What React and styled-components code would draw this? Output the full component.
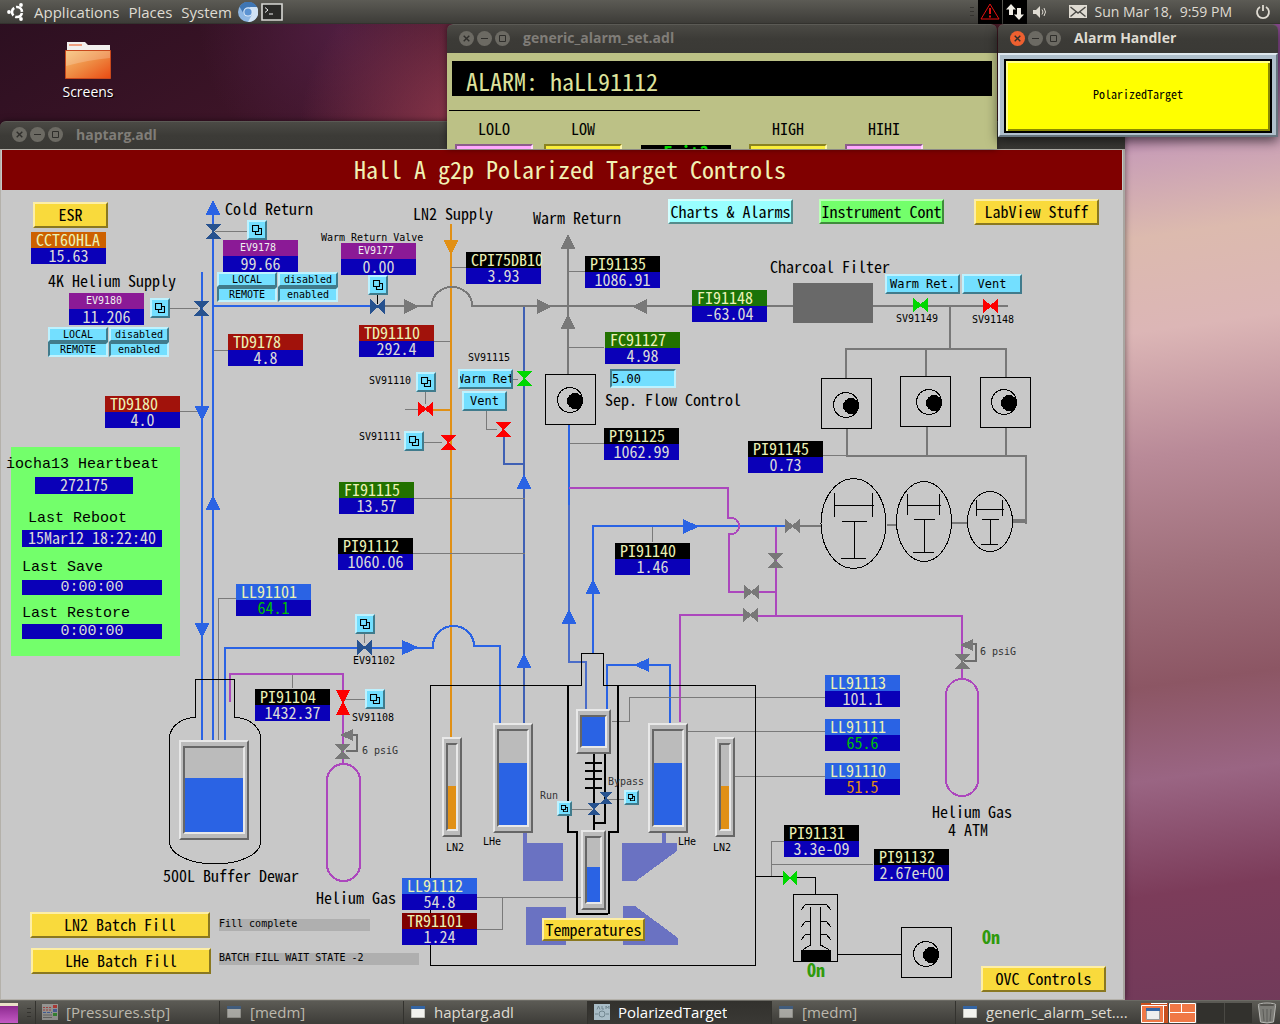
import React from "react";
import styled, { createGlobalStyle, css } from "styled-components";

/* ---------- theme values ---------- */

const uiFont = `"Open Sans", "Noto Sans", sans-serif`;
const fixedFont = `"Noto Sans Mono CJK JP", "Noto Sans CJK JP", "Liberation Mono", monospace`;
const wideFont = `"Liberation Mono", "DejaVu Sans Mono", monospace`;
const smallFont = `"DejaVu Sans Mono", "Liberation Mono", monospace`;

const color = {
  canvas: "#c8c8c8",
  blue: "#2a63e4",
  steel: "#3f60b4",
  slate: "#4a6cc8",
  navy: "#0a00b8",
  valve: "#27528f",
  gray: "#787878",
  wire: "#7a7a7a",
  orange: "#e19015",
  purple: "#ac47bd",
  magnet: "#6a72c2",
  red: "#fd0000",
  green: "#00d800",
};

const tone = {
  yellow: { face: "#f9da3c", light: "#fdeea6", dark: "#8a7820" },
  cyan: { face: "#73dfff", light: "#bdf2ff", dark: "#407b8c" },
  ice: { face: "#99ffff", light: "#d2ffff", dark: "#548c8c" },
  green: { face: "#73ff6b", light: "#bbffb8", dark: "#3f8c3b" },
  pink: { face: "#ffa8ff", light: "#ffd8ff", dark: "#8c5c8c" },
  lemon: { face: "#f9ee3c", light: "#fdf6a6", dark: "#8a8320" },
  face: { face: "#bbbbbb", light: "#e8e8e8", dark: "#666666" },
};

const raised = (t) => css`
  border: 2px solid;
  border-color: ${tone[t].light} ${tone[t].dark} ${tone[t].dark} ${tone[t].light};
  background: ${tone[t].face};
`;
const sunken = (t) => css`
  border: 2px solid;
  border-color: ${tone[t].dark} ${tone[t].light} ${tone[t].light} ${tone[t].dark};
  background: ${tone[t].face};
`;

const Global = createGlobalStyle`
  *, *::before, *::after { box-sizing: border-box; }
  body { margin: 0; font-family: ${uiFont}; }
  button, input { font: inherit; margin: 0; padding: 0; }
`;

/* ---------- desktop ---------- */

const Desktop = styled.div`
  display: flex;
  flex-direction: column;
  height: 100vh;
  overflow: hidden;
  background:
    radial-gradient(circle at 470px 130px, rgba(160, 64, 84, 0.8), rgba(120, 40, 70, 0) 170px),
    radial-gradient(circle at 340px 30px, rgba(84, 32, 70, 0.8), rgba(84, 32, 70, 0) 140px),
    linear-gradient(172deg, #8a4a90 8%, #c99fb6 15%, #dcbaae 23%, #dcb6b6 32%, #b98a98 44%, #a0707c 55%, #8c5664 66%, #9a6583 75%, #7c3c5a 86%, #6f3a5a 100%) right / 160px 100% no-repeat,
    linear-gradient(150deg, #2b0f20, #43162a 20%, #52202a 40%);
`;

const Panel = styled.header`
  flex: none;
  height: 24px;
  display: flex;
  align-items: center;
  position: relative;
  z-index: 5;
  color: #dfdbd2;
  font-size: 15px;
  line-height: 22px;
  background: linear-gradient(#5c5b55, #3d3c38);
  border-bottom: 1px solid #33322e;
`;

const MenuBar = styled.nav`
  display: flex;
  align-items: center;
  gap: 9px;
  padding-left: 7px;
`;

const Launchers = styled.div`
  display: flex;
  align-items: center;
  gap: 3px;
  margin-left: 6px;
`;

const PanelButton = styled.button`
  display: flex;
  align-items: center;
  border: 0;
  background: none;
  color: inherit;
  white-space: pre;
`;

const Clock = styled(PanelButton)`
  margin-right: 22px;
  font-size: 14px;
`;

const PowerButton = styled(PanelButton)`
  width: 18px;
  justify-content: center;
`;

const Tray = styled.div`
  margin-left: auto;
  display: flex;
  align-items: center;
  padding-right: 8px;
`;

const TrayCell = styled.span`
  display: flex;
  width: ${(p) => p.$w}px;
  height: 24px;
  align-items: center;
  justify-content: center;
  background: ${(p) => (p.$dark ? "#000" : "none")};
  margin-right: ${(p) => p.$gap || 0}px;
`;

const Workspace = styled.main`
  flex: 1;
  position: relative;
`;

const DesktopIcon = styled.a`
  position: absolute;
  left: 48px;
  top: 16px;
  width: 80px;
  display: flex;
  flex-direction: column;
  align-items: center;
  gap: 2px;
  color: #fff;
  font-size: 14px;
  line-height: 20px;
  text-decoration: none;
  text-shadow: 1px 1px 1px #000;
`;

/* ---------- windows ---------- */

const WindowFrame = styled.section`
  position: absolute;
  left: ${(p) => p.$x}px;
  top: ${(p) => p.$y}px;
  width: ${(p) => p.$w}px;
  height: ${(p) => (p.$h ? `${p.$h}px` : "auto")};
  z-index: ${(p) => p.$z};
  overflow: ${(p) => (p.$h ? "hidden" : "visible")};
  border-radius: 6px 6px 0 0;
  box-shadow: ${(p) => (p.$active ? "0 4px 12px rgba(0,0,0,.6)" : "0 0 6px rgba(0,0,0,.5)")};
`;

const TitleBar = styled.div`
  height: ${(p) => p.$h}px;
  display: flex;
  align-items: center;
  padding: 0 0 2px 12px;
  gap: 13px;
  border-radius: 6px 6px 0 0;
  border-top: 1px solid #5b5a55;
  background: linear-gradient(#4b4a45, #3c3b37 50%, #3a3935);
  color: ${(p) => (p.$active ? "#dfdbd2" : "#807d78")};
  font-size: 14px;
  font-weight: 700;
  line-height: 20px;
`;

const Controls = styled.div`
  display: flex;
  gap: 3px;
`;

const ControlButton = styled.button`
  width: 15px;
  height: 15px;
  border: 0;
  border-radius: 50%;
  display: grid;
  place-items: center;
  background: ${(p) => (p.$hot ? "#ee6030" : "#6c6a63")};
  color: #2f2e2b;
`;

function Title({ text, active, height }) {
  return (
    <TitleBar $active={active} $h={height}>
      <Controls>
        <ControlButton $hot={active} aria-label="Close">
          <svg width="7" height="7" viewBox="0 0 7 7" stroke="currentColor" strokeWidth="1.4">
            <path d="M.7.7l5.6 5.6M6.3.7L.7 6.3" />
          </svg>
        </ControlButton>
        <ControlButton aria-label="Minimize">
          <svg width="7" height="7" viewBox="0 0 7 7" stroke="currentColor">
            <path d="M0 3.5h7" />
          </svg>
        </ControlButton>
        <ControlButton aria-label="Maximize">
          <svg width="7" height="7" viewBox="0 0 7 7" stroke="currentColor" fill="none">
            <path d="M.5.5h6v6h-6z" />
          </svg>
        </ControlButton>
      </Controls>
      <span>{text}</span>
    </TitleBar>
  );
}

/* ---------- generic_alarm_set.adl ---------- */

const AlarmBody = styled.div`
  height: 200px;
  padding: 8px 5px;
  background: #bcc186;
  font-family: ${fixedFont};
  font-weight: 300;
`;

const AlarmBanner = styled.div`
  height: 35px;
  padding-left: 14px;
  background: #000;
  color: #dde29c;
  font-size: 24px;
  line-height: 40px;
`;

const AlarmRule = styled.hr`
  width: 251px;
  height: 1px;
  border: 0;
  margin: 14px 0 7px -3px;
  background: #000;
`;

const AlarmColumns = styled.div`
  display: flex;
  padding-left: 3px;
  font-size: 16px;
  line-height: 20px;
  text-align: center;
`;

const AlarmColumn = styled.div`
  width: ${(p) => p.$w || 78}px;
  margin-right: ${(p) => p.$gap || 0}px;
  display: flex;
  flex-direction: column;
  gap: 6px;
`;

const AlarmChoice = styled.button`
  height: 24px;
  ${(p) => sunken(p.$tone)}
`;

const AlarmState = styled.output`
  display: block;
  margin-top: 27px;
  height: 22px;
  background: #000;
  color: #00d800;
  font-size: 18px;
  font-weight: 700;
  line-height: 14px;
`;

/* ---------- Alarm Handler ---------- */

const HandlerBody = styled.div`
  height: 84px;
  padding: 4px;
  border: 2px solid;
  border-color: #dfe8ee #66757f #66757f #dfe8ee;
  background: #b0c0cc;
`;

const HandlerButton = styled.button`
  width: 100%;
  height: 74px;
  padding-bottom: 4px;
  border: 2px solid #000;
  background: #ff0;
  box-shadow: inset 2px 2px #ffff8c, inset -2px -2px #8a8a00;
  font-family: ${fixedFont};
  font-size: 12px;
  line-height: 16px;
`;

/* ---------- haptarg.adl ---------- */

const ORIGIN_Y = 190;

const Display = styled.div`
  border: 1px solid #b4b1aa;
  border-right: 2px solid #a8a5a0;
  background: ${color.canvas};
  font-family: ${fixedFont};
  font-weight: 300;
`;

const DisplayTitle = styled.h1`
  margin: 0 1px;
  padding-left: 16px;
  height: 40px;
  background: #800000;
  color: #f1f1b4;
  font-size: 24px;
  font-weight: 300;
  line-height: 38px;
  text-align: center;
`;

const Canvas = styled.div`
  position: relative;
  height: 809px;
  margin-left: -1px;
`;

const Piping = styled.svg`
  position: absolute;
  left: 0;
  top: 0;
  width: 1123px;
  height: 809px;
  shape-rendering: crispEdges;
`;

const placed = css`
  position: absolute;
  left: ${(p) => p.$x}px;
  top: ${(p) => p.$y - ORIGIN_Y}px;
`;

const Label = styled.span`
  ${placed}
  white-space: pre;
  color: ${(p) => p.$color || "#000"};
  font-family: ${(p) => (p.$kind === "small" ? smallFont : p.$kind === "wide" ? wideFont : fixedFont)};
  font-size: ${(p) => (p.$kind === "small" ? 10 : p.$kind === "wide" ? 15 : 16)}px;
  line-height: ${(p) => (p.$kind === "small" ? 14 : p.$kind === "wide" ? 24 : 18)}px;
`;

const PumpState = styled(Label)`
  font-size: 18px;
  font-weight: 700;
  color: #2f9a0c;
`;

const ReadoutBox = styled.div`
  ${placed}
  width: 75px;
  line-height: 14px;
  font-size: 16px;
`;

const ReadoutName = styled.div`
  height: 16px;
  padding-left: ${(p) => (p.$small ? 17 : 5)}px;
  background: ${(p) => p.$bg};
  color: ${(p) => (p.$small ? "#f0f0f0" : "#ebf1b5")};
  font-family: ${(p) => (p.$small ? smallFont : fixedFont)};
  font-size: ${(p) => (p.$small ? 10 : 16)}px;
  line-height: ${(p) => (p.$small ? 16 : 14)}px;
  white-space: nowrap;
`;

const ReadoutValue = styled.output`
  display: block;
  height: 16px;
  background: ${color.navy};
  color: ${(p) => p.$color || "#dadada"};
  text-align: center;
  white-space: nowrap;
`;

const StatusPanel = styled.div`
  ${placed}
  width: 169px;
  height: 209px;
  background: #73ff6b;
`;

const StatusValue = styled.output`
  ${placed}
  width: ${(p) => p.$w}px;
  height: ${(p) => p.$h}px;
  background: ${color.navy};
  color: #dadada;
  text-align: center;
  white-space: pre;
  font-family: ${(p) => (p.$wide ? wideFont : fixedFont)};
  font-size: ${(p) => (p.$wide ? 15 : 16)}px;
  line-height: 15px;
`;

const FillStatus = styled.output`
  ${placed}
  width: ${(p) => p.$w}px;
  height: 12px;
  background: #afafaf;
  font-family: ${smallFont};
  font-size: 10px;
  line-height: 10px;
  white-space: pre;
`;

const DisplayButton = styled.button`
  ${placed}
  ${(p) => raised(p.$tone)}
  width: ${(p) => p.$w}px;
  height: ${(p) => p.$h}px;
  padding-bottom: ${(p) => (p.$mid ? 0 : 2)}px;
  display: flex;
  align-items: center;
  justify-content: center;
  overflow: hidden;
  color: #000;
  white-space: nowrap;
  font-family: ${(p) => (p.$mid ? smallFont : fixedFont)};
  font-size: ${(p) => (p.$mid ? 12 : 16)}px;
  line-height: 20px;
`;

const RelatedButton = styled.button`
  ${placed}
  ${raised("cyan")}
  width: ${(p) => p.$s}px;
  height: ${(p) => p.$s}px;
  display: grid;
  place-items: center;
`;

const Choices = styled.div`
  ${placed}
  display: grid;
  grid-template-columns: 60px 60px;
  grid-auto-flow: column;
  grid-template-rows: 15px 15px;
  column-gap: 1px;
  font-family: ${smallFont};
  font-size: 10px;
  line-height: 11px;
  text-align: center;
`;

const Choice = styled.label`
  ${raised("cyan")}
  position: relative;
  &:has(input:checked) {
    ${sunken("cyan")}
  }
  input {
    position: absolute;
    inset: 0;
    opacity: 0;
  }
`;

const Setpoint = styled.input`
  ${placed}
  ${sunken("cyan")}
  width: 66px;
  height: 19px;
  border-radius: 0;
  outline: 0;
  font-family: ${smallFont};
  font-size: 12px;
  line-height: 14px;
`;

const Tank = styled.div`
  ${placed}
  ${raised("face")}
  width: ${(p) => p.$w}px;
  height: ${(p) => p.$h}px;
  padding: 4px 2px;
  display: flex;
`;

const Bar = styled.div`
  ${sunken("face")}
  flex: 1;
  display: flex;
  flex-direction: column;
  justify-content: flex-end;
`;

const Level = styled.div`
  background: ${(p) => p.$color};
`;

/* ---------- data ---------- */

const BLACK = "#000";
const READOUTS = [
  ["CCT60HLA", "15.63", 31, 232, "#cd6100"],
  ["EV9178", "99.66", 223, 240, "#8b1a96"],
  ["EV9180", "11.206", 69, 293, "#8b1a96"],
  ["EV9177", "0.00", 341, 243, "#8b1a96"],
  ["CPI75DB10", "3.93", 466, 252, BLACK],
  ["PI91135", "1086.91", 585, 256, BLACK],
  ["TD9178", "4.8", 228, 334, "#a1120b"],
  ["TD9180", "4.0", 105, 396, "#a1120b"],
  ["TD91110", "292.4", 359, 325, "#a1120b"],
  ["FI91148", "-63.04", 692, 290, "#1a7309"],
  ["FC91127", "4.98", 605, 332, "#227100"],
  ["PI91125", "1062.99", 604, 428, BLACK],
  ["PI91145", "0.73", 748, 441, BLACK],
  ["FI91115", "13.57", 339, 482, "#227100"],
  ["PI91112", "1060.06", 338, 538, BLACK],
  ["PI91140", "1.46", 615, 543, BLACK],
  ["LL91101", "64.1", 236, 584, color.blue, "#00c000"],
  ["PI91104", "1432.37", 255, 689, BLACK],
  ["LL91113", "101.1", 825, 675, color.blue],
  ["LL91111", "65.6", 825, 719, color.blue, "#00c000"],
  ["LL91110", "51.5", 825, 763, color.blue, color.orange],
  ["LL91112", "54.8", 402, 878, color.blue],
  ["TR91101", "1.24", 402, 913, "#800000"],
  ["PI91131", "3.3e-09", 784, 825, BLACK],
  ["PI91132", "2.67e+00", 874, 849, BLACK],
];

const LABELS = [
  ["Cold Return", 225, 199],
  ["4K Helium Supply", 48, 271],
  ["LN2 Supply", 413, 204],
  ["Warm Return", 533, 208],
  ["Charcoal Filter", 770, 257],
  ["Sep. Flow Control", 605, 390],
  ["500L Buffer Dewar", 163, 866],
  ["Helium Gas", 316, 888],
  ["Helium Gas", 932, 802],
  ["4 ATM", 948, 820],
  ["Warm Return Valve", 321, 231, "small"],
  ["SV91110", 369, 374, "small"],
  ["SV91111", 359, 430, "small"],
  ["SV91115", 468, 351, "small"],
  ["SV91149", 896, 312, "small"],
  ["SV91148", 972, 313, "small"],
  ["EV91102", 353, 654, "small"],
  ["SV91108", 352, 711, "small"],
  ["6 psiG", 362, 744, "small", "#333"],
  ["6 psiG", 980, 645, "small", "#333"],
  ["Run", 540, 789, "small", "#333"],
  ["Bypass", 608, 775, "small", "#333"],
  ["LN2", 446, 841, "small"],
  ["LHe", 483, 835, "small"],
  ["LHe", 678, 835, "small"],
  ["LN2", 713, 841, "small"],
  ["iocha13 Heartbeat", 6, 453, "wide"],
  ["Last Reboot", 28, 507, "wide"],
  ["Last Save", 22, 556, "wide"],
  ["Last Restore", 22, 602, "wide"],
];

const BUTTONS = [
  ["ESR", 33, 202, 75, 26, "yellow"],
  ["Charts & Alarms", 668, 199, 125, 25, "ice"],
  ["Instrument Cont", 819, 199, 125, 25, "green"],
  ["LabView Stuff", 974, 199, 125, 26, "yellow"],
  ["LN2 Batch Fill", 30, 912, 180, 26, "yellow"],
  ["LHe Batch Fill", 31, 948, 180, 26, "yellow"],
  ["Temperatures", 542, 918, 103, 23, "yellow"],
  ["OVC Controls", 981, 966, 125, 26, "yellow"],
  ["Warm Ret", 458, 369, 55, 20, "cyan", true],
  ["Vent", 462, 391, 45, 20, "cyan", true],
  ["Warm Ret.", 885, 274, 75, 20, "cyan", true],
  ["Vent", 962, 274, 60, 20, "cyan", true],
];

const RELATED = [
  ["EV9178 control", 247, 220, 20],
  ["EV9180 control", 150, 298, 20],
  ["EV9177 control", 368, 275, 20],
  ["SV91110 control", 416, 372, 20],
  ["SV91111 control", 404, 431, 20],
  ["EV91102 control", 355, 614, 20],
  ["SV91108 control", 365, 689, 20],
  ["Run valve control", 557, 801, 15],
  ["Bypass valve control", 624, 790, 15],
];

const TANKS = [
  [179, 740, 70, 100, 64, color.blue],
  [442, 737, 20, 100, 51, color.orange],
  [493, 723, 40, 110, 66, color.blue],
  [576, 709, 35, 45, 100, color.blue],
  [648, 723, 40, 110, 66, color.blue],
  [715, 737, 20, 100, 51, color.orange],
  [581, 830, 25, 80, 55, color.blue],
];

/* ---------- schematic parts ---------- */

/* flow arrow inside the box x, y, w, h, pointing in direction d */
function Arrow({ x, y, w = 15, h = 15, d, c = color.blue }) {
  const pts = {
    up: [x, y + h, x + w, y + h, x + w / 2, y],
    down: [x, y, x + w, y, x + w / 2, y + h],
    left: [x + w, y, x + w, y + h, x, y + h / 2],
    right: [x, y, x, y + h, x + w, y + h / 2],
  }[d];
  return <polygon points={pts.join(" ")} fill={c} />;
}

/* bow-tie valve; v is for one on a vertical pipe */
function Valve({ x, y, w = 15, h = 15, v, c = color.valve }) {
  const d = v
    ? `M${x} ${y}H${x + w}L${x + w / 2 + 1} ${y + h / 2}L${x + w} ${y + h}H${x}L${x + w / 2 - 1} ${y + h / 2}Z`
    : `M${x} ${y}L${x + w / 2} ${y + h / 2 - 1}L${x + w} ${y}V${y + h}L${x + w / 2} ${y + h / 2 + 1}L${x} ${y + h}Z`;
  return <path d={d} fill={c} />;
}

function Pump({ x, y, cx, cy }) {
  return (
    <g stroke="#000">
      <rect x={x + 0.5} y={y + 0.5} width="50" height="50" fill="none" />
      <circle cx={cx} cy={cy} r="12.5" fill="none" />
      <circle cx={cx + 5} cy={cy + 1} r="7.5" fill="#000" />
    </g>
  );
}

const pipes = [
  [color.orange, "M451 224V738M433 410H451"],
  [color.blue, "M202 272V740M213 214V740M213 306H370M225 740V648H433V646A20.5 20 0 0 1 474 646H500V724"],
  [color.steel, "M524 306V724M504 437V464H524"],
  [color.blue, "M569 425V505"],
  [color.slate, "M569 505V662H586V710"],
  [color.blue, "M593 653V526H786M607 710V665H670V724"],
  [color.gray, "M385 306H432V305A20 18 0 0 1 472 305V306H793M873 306H1008M950 306V350M846 378V349H1006V378M926 349V377"],
  [color.gray, "M847 428V456H1026V524M927 426V456M1006 427V456M568 248V375M800 526H822M887 525H897M952 523H968"],
  [color.purple, "M230 702V674H343V764M569 488H728V518H732A7 8 0 0 1 732 534H729V592H776M776 527V616M680 722V615H757M757 616H962V679"],
];

const wires =
  "M215 231.5H247M170 308.5H198M214 350.5H228M172 411.5H198M451 267.5H466M569 271.5H585M569 347.5H604M570 443.5H604" +
  "M434 341.5H450M425.5 392V404M405 409.5H418M424 442.5H442M512 379.5H518M486.5 411V429.5H497M823 455.5H848M414 498.5H525" +
  "M413 553.5H525M364.5 634V643M652.5 527V542M218.5 740V598.5H236M292.5 675V688M345 699.5H365M612 721.5H629.5V697.5H825" +
  "M688 731.5H831M735 776.5H826M477 897.5H581M477 929.5H502.5V897M572 809.5H592M608 799.5H624M771.5 876V841.5H784M771 864.5H873";

function Schematic() {
  return (
    <Piping viewBox={`0 ${ORIGIN_Y} 1123 809`} fill="none" role="img" aria-label="Cryogen piping schematic">
      <path
        fill={color.magnet}
        d="M523 833h4v10h36v38h-40zM526 907h40v38h-40zM662 833h4v10h11v8l-41 30h-14v-38h40zM623 906h12l43 32v7h-55z"
      />
      {pipes.map(([c, d]) => (
        <path key={d} d={d} stroke={c} strokeWidth="2" />
      ))}
      <path d="M1013 521H1027" stroke={color.gray} strokeWidth="4" />
      <path d={wires} stroke={color.wire} />
      <rect x="793" y="283" width="80" height="40" fill="#696969" />

      {/* helium bottles and their regulators */}
      <g stroke={color.purple} strokeWidth="2">
        <rect x="327" y="764" width="33" height="117" rx="16.5" />
        <rect x="946" y="679" width="32" height="117" rx="16" />
      </g>
      <path d="M350 735H357V751H346M971 644H976V661H964" stroke="#6c6c6c" strokeWidth="2" />
      <Arrow x={340} y={729} h={12} w={13} d="left" c={color.gray} />
      <Arrow x={960} y={639} h={12} w={13} d="left" c={color.gray} />

      {/* vessels and outlines */}
      <g stroke="#000">
        <path d="M195.5 679.5H234.5V717.5A26 21 0 0 1 260.5 738.5V842A45.5 22 0 0 1 169.5 842V738.5A26 21 0 0 1 195.5 717.5Z" />
        <path d="M430.5 685.5H581.5V653.5H603.5V685.5H755.5V965.5H430.5Z" />
        <path d="M755 876.5H784M797 877.5H815.5V894M838 954.5H901M377.5 295V304" />
        <path strokeWidth="2" d="M568 686V832H577V914H608M618 686V832H609V914M594 754V830M605 754V823H594M585 763H602M585 771H602M585 779H602M585 788H602" />
        <ellipse cx="853.5" cy="523.5" rx="32.5" ry="45" />
        <ellipse cx="924" cy="521.5" rx="27.5" ry="40" />
        <ellipse cx="990" cy="521.5" rx="22.5" ry="30" />
        <path d="M834.5 493V517M872.5 493V517M834 505.5H874M842 521.5H867M854.5 521V558M841 558.5H866" />
        <path d="M907.5 494V515M939.5 494V515M907 505.5H941M914 519.5H935M924.5 519V552M913 552.5H934" />
        <path d="M976.5 500V516M1002.5 500V516M976 509.5H1004M982 519.5H999M990.5 519V544M981 544.5H998" />
      </g>

      {/* turbo pump */}
      <g stroke="#000">
        <rect x="793.5" y="894.5" width="44" height="67" />
        <path d="M801 910L805.5 904.5H826.5L831 910M810.5 907V945L803 949.5M820.5 907V945L829 949.5" />
        <path d="M810 921.5H805.5L801 927M820 921.5H826.5L831 927M810 934.5H805.5L801 940M820 934.5H826.5L831 940" />
        <rect x="801.5" y="950.5" width="29" height="11" fill="#000" />
      </g>

      <Pump x={545} y={374} cx={570} cy={400} />
      <Pump x={821} y={378} cx={846} cy={405} />
      <Pump x={900} y={376} cx={929} cy={402} />
      <Pump x={980} y={377} cx={1004} cy={402} />
      <Pump x={901} y={927} cx={926} cy={954} />

      <Arrow x={205.5} y={200} d="up" />
      <Arrow x={205.5} y={495} d="up" />
      <Arrow x={194.5} y={406} d="down" />
      <Arrow x={194.5} y={623} d="down" />
      <Arrow x={516.5} y={474} d="up" />
      <Arrow x={516.5} y={653} d="up" />
      <Arrow x={561.5} y={609} d="up" />
      <Arrow x={585.5} y={579} d="up" />
      <Arrow x={402} y={640} w={17} d="right" />
      <Arrow x={683} y={519} w={16} d="right" />
      <Arrow x={634} y={658} w={15} h={14} d="left" />
      <Arrow x={443.5} y={240} d="down" c={color.orange} />
      <Arrow x={560.5} y={234} d="up" c={color.gray} />
      <Arrow x={560.5} y={314} d="up" c={color.gray} />
      <Arrow x={404} y={299} d="right" c={color.gray} />
      <Arrow x={537} y={299} d="right" c={color.gray} />
      <Arrow x={632} y={299} d="left" c={color.gray} />

      <Valve v x={206} y={224} />
      <Valve v x={194} y={301} />
      <Valve v x={588} y={803} w={12} h={12} />
      <Valve v x={600} y={792} w={12} h={12} />
      <Valve x={370} y={299} />
      <Valve x={357} y={640} />
      <Valve v x={441} y={435} c={color.red} />
      <Valve v x={496} y={422} c={color.red} />
      <Valve v x={336} y={690} w={14} h={25} c={color.red} />
      <Valve x={418} y={402} h={14} c={color.red} />
      <Valve x={983} y={299} h={14} c={color.red} />
      <Valve v x={517} y={371} c={color.green} />
      <Valve x={913} y={298} h={14} c={color.green} />
      <Valve x={783} y={871} w={14} h={14} c={color.green} />
      <Valve v x={335} y={744} c={color.gray} />
      <Valve v x={768} y={553} c={color.gray} />
      <Valve v x={955} y={654} c={color.gray} />
      <Valve x={785} y={519} h={14} c={color.gray} />
      <Valve x={744} y={585} h={14} c={color.gray} />
      <Valve x={743} y={608} h={14} c={color.gray} />
    </Piping>
  );
}

function RelatedIcon({ size }) {
  return (
    <svg width={size} height={size} viewBox="0 0 10 10" fill="none" stroke="#000" strokeWidth={size < 10 ? 1.5 : 1.1}>
      <path d="M.5.5h6v6h-6zM6.5 3.5h3v6h-6v-3" />
    </svg>
  );
}

function ModeChoices({ name, x, y }) {
  return (
    <Choices $x={x} $y={y} role="group" aria-label={`${name} mode`}>
      <Choice>
        <input type="radio" name={`${name}-mode`} />
        LOCAL
      </Choice>
      <Choice>
        <input type="radio" name={`${name}-mode`} defaultChecked />
        REMOTE
      </Choice>
      <Choice>
        <input type="radio" name={`${name}-enable`} />
        disabled
      </Choice>
      <Choice>
        <input type="radio" name={`${name}-enable`} defaultChecked />
        enabled
      </Choice>
    </Choices>
  );
}

function TargetDisplay() {
  return (
    <Display>
      <DisplayTitle>Hall A g2p Polarized Target Controls</DisplayTitle>
      <Canvas>
        <Schematic />
        <StatusPanel $x={11} $y={447} />
        <StatusValue $x={35} $y={477} $w={98} $h={17}>272175</StatusValue>
        <StatusValue $x={22} $y={530} $w={140} $h={17}>15Mar12 18:22:40</StatusValue>
        <StatusValue $x={22} $y={580} $w={140} $h={15} $wide>0:00:00</StatusValue>
        <StatusValue $x={22} $y={624} $w={140} $h={15} $wide>0:00:00</StatusValue>
        {READOUTS.map(([name, value, x, y, bg, fg]) => (
          <ReadoutBox key={name} $x={x} $y={y}>
            <ReadoutName $bg={bg} $small={name.startsWith("EV")}>{name}</ReadoutName>
            <ReadoutValue $color={fg}>{value}</ReadoutValue>
          </ReadoutBox>
        ))}
        {LABELS.map(([text, x, y, kind, c]) => (
          <Label key={`${text}${x}`} $x={x} $y={y} $kind={kind} $color={c}>{text}</Label>
        ))}
        {TANKS.map(([x, y, w, h, level, c]) => (
          <Tank key={x} $x={x} $y={y} $w={w} $h={h}>
            <Bar>
              <Level $color={c} style={{ height: `${level}%` }} />
            </Bar>
          </Tank>
        ))}
        {BUTTONS.map(([text, x, y, w, h, t, mid]) => (
          <DisplayButton key={`${text}${x}`} $x={x} $y={y} $w={w} $h={h} $tone={t} $mid={mid}>{text}</DisplayButton>
        ))}
        {RELATED.map(([name, x, y, s]) => (
          <RelatedButton key={name} aria-label={name} $x={x} $y={y} $s={s}>
            <RelatedIcon size={s === 20 ? 10 : 7} />
          </RelatedButton>
        ))}
        <ModeChoices name="EV9178" x={217} y={272} />
        <ModeChoices name="EV9180" x={48} y={327} />
        <Setpoint $x={610} $y={369} aria-label="Separator flow setpoint" defaultValue="5.00" />
        <FillStatus $x={219} $y={919} $w={151}>Fill complete</FillStatus>
        <FillStatus $x={219} $y={953} $w={200}>BATCH FILL WAIT STATE -2</FillStatus>
        <PumpState $x={982} $y={927}>On</PumpState>
        <PumpState $x={807} $y={960}>On</PumpState>
      </Canvas>
    </Display>
  );
}

/* ---------- bottom panel ---------- */

const TaskPanel = styled(Panel).attrs({ as: "footer" })`
  border-bottom: 0;
  border-top: 1px solid #6b6a64;
`;

const ShowDesktop = styled.button`
  width: 18px;
  height: 20px;
  border: 0;
  background: linear-gradient(#e9e0c8 3px, #8d2a90 3px, #c45ac4);
`;

const Grip = styled.span`
  width: 4px;
  height: 9px;
  margin: 0 4px 0 9px;
  background: repeating-linear-gradient(#34332f 0 1px, transparent 1px 4px);
`;

const TaskList = styled.div`
  flex: 1;
  display: flex;
  height: 100%;
`;

const Task = styled.button`
  flex: 1 1 0;
  min-width: 0;
  display: flex;
  align-items: center;
  gap: 8px;
  padding: 0 0 2px 6px;
  border: 0;
  border-left: 1px solid #33322e;
  background: ${(p) => (p.$state === "active" ? "linear-gradient(#32312d, #3a3935)" : "none")};
  color: ${(p) => (p.$state === "min" ? "#bcb8ad" : p.$state === "active" ? "#fff" : "#dfdbd2")};
  line-height: 20px;
  svg {
    flex: none;
    opacity: ${(p) => (p.$state === "min" ? 0.55 : 1)};
  }
  span {
    overflow: hidden;
    text-overflow: ellipsis;
    white-space: nowrap;
  }
`;

const Pager = styled.div`
  display: grid;
  grid-template-columns: repeat(4, 27px);
  column-gap: 1px;
  height: 20px;
  margin: 0 4px 0 2px;
  background: #4a4944;
`;

const PagerCell = styled.span`
  display: flex;
  background: ${(p) => (p.$on ? "#c9501f" : "#32312d")};
`;

function TaskIcon({ kind }) {
  if (kind === "chart")
    return (
      <svg width="16" height="16" viewBox="0 0 16 16">
        <path fill="#c9c9c9" d="M0 0h16v16H0z" />
        <path stroke="#d33" d="M1 3.5h9M1 6h9" strokeDasharray="2 1" />
        <path stroke="#36c" d="M1 8.5h9" strokeDasharray="3 1" />
        <path stroke="#777" d="M1 11h9M1 13.5h9" />
        <path fill="#e22" d="M11 1h4v3h-4z" />
        <path fill="#46c" d="M11 5h4v3h-4z" />
        <path fill="#2a2" d="M11 9h4v3h-4z" />
      </svg>
    );
  if (kind === "alh")
    return (
      <svg width="16" height="16" viewBox="0 0 16 16" fill="none" stroke="#71868f">
        <path fill="#a9bdc7" stroke="none" d="M0 0h16v16H0z" />
        <circle cx="8" cy="10" r="3" />
        <path d="M1 10h3M12 10h3M3 5.500L4.500 2L6 5.500M8 2v3h2M12 5V2l1.500 2L15 2v3" />
      </svg>
    );
  return (
    <svg width="16" height="16" viewBox="0 0 16 16">
      <path fill="#f2f2ee" stroke="#c4c4be" d="M1.500 2.500h13v11h-13z" />
      <path fill="#3465a4" d="M1 2h14v3H1z" />
    </svg>
  );
}

const TASKS = [
  ["[Pressures.stp]", "chart", "min"],
  ["[medm]", "window", "min"],
  ["haptarg.adl", "window", "open"],
  ["PolarizedTarget", "alh", "active"],
  ["[medm]", "window", "min"],
  ["generic_alarm_set....", "window", "open"],
];

/* ---------- page ---------- */

export default function App() {
  return (
    <Desktop>
      <Global />
      <Panel>
        <MenuBar>
          <PanelButton aria-label="Main menu">
            <svg width="18" height="18" viewBox="0 0 18 18" fill="none">
              <circle cx="10" cy="9" r="5" stroke="#fff" strokeWidth="2.600" strokeDasharray="8.500 2" strokeDashoffset="-1" />
              <g fill="#fff">
                <circle cx="2" cy="9" r="1.900" />
                <circle cx="14" cy="2" r="1.900" />
                <circle cx="14" cy="16" r="1.900" />
              </g>
            </svg>
          </PanelButton>
          <PanelButton>Applications</PanelButton>
          <PanelButton>Places</PanelButton>
          <PanelButton>System</PanelButton>
        </MenuBar>
        <Launchers>
          <PanelButton aria-label="Chromium">
            <svg width="20" height="20" viewBox="0 0 20 20">
              <circle cx="10" cy="10" r="10" fill="#8db7e4" />
              <path d="M10 5h9A10 10 0 0 0 1.500 4.700L5.800 12A5 5 0 0 1 10 5z" fill="#3f76b4" />
              <path d="M14 12.500L10 20a10 10 0 0 0 9-15h-7z" fill="#cfe2f5" />
              <circle cx="10" cy="10" r="4.600" fill="#dbe9f8" />
              <circle cx="10" cy="10" r="3.600" fill="#5b93d3" />
            </svg>
          </PanelButton>
          <PanelButton aria-label="Terminal">
            <svg width="22" height="18" viewBox="0 0 22 18" fill="none">
              <path d="M1 1h20v16H1z" fill="#2a2a28" stroke="#d8d8d4" strokeWidth="1.600" />
              <path d="M4 4.500l3 2.500-3 2.500M8 11h4" stroke="#eee" />
            </svg>
          </PanelButton>
        </Launchers>
        <Tray>
          <Grip />
          <TrayCell $w={24} $dark $gap={1}>
            <svg width="20" height="17" viewBox="0 0 20 17" fill="none" stroke="#e01010">
              <path d="M10 1L19 16H1z" />
              <path d="M10 5v6M10 12.500v2" strokeWidth="2" />
            </svg>
          </TrayCell>
          <TrayCell $w={24} $dark $gap={5}>
            <svg width="20" height="18" viewBox="0 0 20 18" fill="#efece4">
              <path d="M6 1l5 5.500H8V12H4V6.500H1zM14 17l-5-5.500h3V5h4v6.500h3z" />
            </svg>
          </TrayCell>
          <TrayCell $w={16} $gap={20}>
            <svg width="14" height="12" viewBox="0 0 14 12" fill="#dfdbd2">
              <path d="M0 4h3l4-4v12L3 8H0z" />
              <path d="M9 3.500q2 2.500 0 5M11 2q3 4 0 8" fill="none" stroke="#dfdbd2" />
            </svg>
          </TrayCell>
          <TrayCell $w={20} $gap={7}>
            <svg width="18" height="13" viewBox="0 0 18 13" fill="none">
              <path d="M0 0h18v13H0z" fill="#dfdbd2" />
              <path d="M1.500 2L9 8l7.500-6M1.500 11.500L7 7M16.500 11.500L11 7" stroke="#4a4945" strokeWidth="1.400" />
            </svg>
          </TrayCell>
          <Clock>{"Sun Mar 18,  9:59 PM"}</Clock>
          <PowerButton aria-label="Power">
            <svg width="16" height="16" viewBox="0 0 16 16" fill="none" stroke="#dfdbd2" strokeWidth="1.800">
              <path d="M5 3a6 6 0 1 0 6 0M8 1v6" />
            </svg>
          </PowerButton>
        </Tray>
      </Panel>

      <Workspace>
        <DesktopIcon href="#screens">
          <svg width="48" height="40" viewBox="0 0 48 40">
            <defs>
              <linearGradient id="folder" x1="0" y1="0" x2="1" y2="1">
                <stop offset="0" stopColor="#f6c070" />
                <stop offset=".5" stopColor="#ee8a42" />
                <stop offset="1" stopColor="#ea4a12" />
              </linearGradient>
            </defs>
            <path d="M3 2h18l3 3h22v8H3z" fill="#f2f0ee" />
            <path d="M5 4h13v2H5z" fill="#f0a080" />
            <path d="M1.500 10.500h45V38.500h-45z" fill="url(#folder)" stroke="#c8481c" />
            <path d="M2 11h44v7Q24 20 2 26z" fill="#fff" opacity=".2" />
          </svg>
          Screens
        </DesktopIcon>

        <WindowFrame $x={0} $y={97} $w={1125} $z={1}>
          <Title text="haptarg.adl" height={28} />
          <TargetDisplay />
        </WindowFrame>

        <WindowFrame $x={447} $y={0} $w={550} $h={125} $z={2}>
          <Title text="generic_alarm_set.adl" height={29} />
          <AlarmBody>
            <AlarmBanner>ALARM: haLL91112</AlarmBanner>
            <AlarmRule />
            <AlarmColumns>
              <AlarmColumn $gap={11}>LOLO<AlarmChoice $tone="pink" aria-label="LOLO severity" /></AlarmColumn>
              <AlarmColumn $gap={19}>LOW<AlarmChoice $tone="lemon" aria-label="LOW severity" /></AlarmColumn>
              <AlarmColumn $w={90} $gap={18}><AlarmState>Exit?</AlarmState></AlarmColumn>
              <AlarmColumn $gap={18}>HIGH<AlarmChoice $tone="lemon" aria-label="HIGH severity" /></AlarmColumn>
              <AlarmColumn>HIHI<AlarmChoice $tone="pink" aria-label="HIHI severity" /></AlarmColumn>
            </AlarmColumns>
          </AlarmBody>
        </WindowFrame>

        <WindowFrame $x={998} $y={0} $w={280} $z={3} $active>
          <Title text="Alarm Handler" active height={29} />
          <HandlerBody>
            <HandlerButton>PolarizedTarget</HandlerButton>
          </HandlerBody>
        </WindowFrame>
      </Workspace>

      <TaskPanel>
        <ShowDesktop aria-label="Show desktop" />
        <Grip />
        <TaskList>
          {TASKS.map(([text, icon, state], i) => (
            <Task key={i} $state={state}>
              <TaskIcon kind={icon} />
              <span>{text}</span>
            </Task>
          ))}
        </TaskList>
        <Pager>
          <PagerCell $on>
            <svg width="27" height="20" viewBox="0 0 27 20">
              <path d="M.5 2.500h22v17H.5z" fill="#f07846" stroke="#fff" />
              <path d="M10 .5h16M19 2.500h7" stroke="#fff" />
              <path d="M5.500 5.500h13v11h-13z" fill="#eee" stroke="#999" />
              <path d="M5 5h14v3H5z" fill="#3465a4" />
            </svg>
          </PagerCell>
          <PagerCell>
            <svg width="27" height="20" viewBox="0 0 27 20" fill="#f07846" stroke="#fff">
              <path d="M.5.5h12v9H.5zM12.500.5h14v9h-14zM.5 9.500h26v10H.5z" />
            </svg>
          </PagerCell>
          <PagerCell />
          <PagerCell />
        </Pager>
        <TrayCell $w={22} $gap={2}>
          <svg width="20" height="22" viewBox="0 0 20 22" fill="none" stroke="#b9b9b5">
            <ellipse cx="10" cy="3" rx="9" ry="2" fill="#55544f" />
            <path d="M1.500 4l2 16q6.500 2 13 0l2-16" fill="#7d7d78" />
            <path d="M6 7l1 12M10 7v13M14 7l-1 12" stroke="#5c5c58" />
          </svg>
        </TrayCell>
      </TaskPanel>
    </Desktop>
  );
}
